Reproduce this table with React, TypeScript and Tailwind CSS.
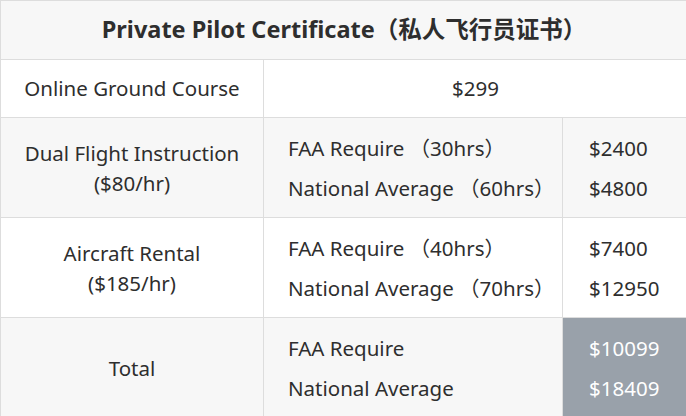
import React from 'react';

const font = { fontFamily: '"Noto Sans", "Noto Sans CJK SC", sans-serif' };

interface PriceRow {
  label: string[];
  items: { name: string; price: string }[];
  bg: string;
  total?: boolean;
}

const rows: PriceRow[] = [
  {
    label: ['Dual Flight Instruction', '($80/hr)'],
    items: [
      { name: 'FAA Require （30hrs）', price: '$2400' },
      { name: 'National Average （60hrs）', price: '$4800' },
    ],
    bg: 'bg-[#f7f7f7]',
  },
  {
    label: ['Aircraft Rental', '($185/hr)'],
    items: [
      { name: 'FAA Require （40hrs）', price: '$7400' },
      { name: 'National Average （70hrs）', price: '$12950' },
    ],
    bg: 'bg-white',
  },
  {
    label: ['Total'],
    items: [
      { name: 'FAA Require', price: '$10099' },
      { name: 'National Average', price: '$18409' },
    ],
    bg: 'bg-[#f7f7f7]',
    total: true,
  },
];

export default function App() {
  return (
    <div className="w-[686px] h-[416px] overflow-hidden bg-white text-[#2e2e2e]" style={font}>
      <div className="w-[687px] border-l border-t border-[#dddddd] grid grid-cols-[263px_299px_125px]">
        <div className="col-span-3 h-[59px] border-b border-r border-[#dddddd] bg-[#f7f7f7] flex items-center justify-center text-[23.5px] font-bold">
          Private Pilot Certificate（私人飞行员证书）
        </div>

        <div className="h-[58px] border-b border-r border-[#dddddd] bg-white flex items-center justify-center text-[20.5px]">
          Online Ground Course
        </div>
        <div className="col-span-2 h-[58px] border-b border-r border-[#dddddd] bg-white flex items-center justify-center text-[20.5px]">
          $299
        </div>

        {rows.map((row, i) => (
          <React.Fragment key={i}>
            <div className={`h-[100px] border-b border-r border-[#dddddd] ${row.bg} flex flex-col items-center justify-center text-[20.5px] leading-[30px]`}>
              {row.label.map((l) => (
                <span key={l}>{l}</span>
              ))}
            </div>
            <div className={`h-[100px] border-b border-r border-[#dddddd] ${row.bg} flex flex-col justify-center pl-[24px] text-[20.5px] leading-[40px] whitespace-pre`}>
              {row.items.map((it) => (
                <span key={it.name}>{it.name}</span>
              ))}
            </div>
            <div
              className={`h-[100px] border-b border-r border-[#dddddd] ${
                row.total ? 'bg-[#99a1aa] text-white' : row.bg
              } flex flex-col justify-center pl-[26px] text-[20.5px] leading-[40px]`}
            >
              {row.items.map((it) => (
                <span key={it.price}>{it.price}</span>
              ))}
            </div>
          </React.Fragment>
        ))}
      </div>
    </div>
  );
}
